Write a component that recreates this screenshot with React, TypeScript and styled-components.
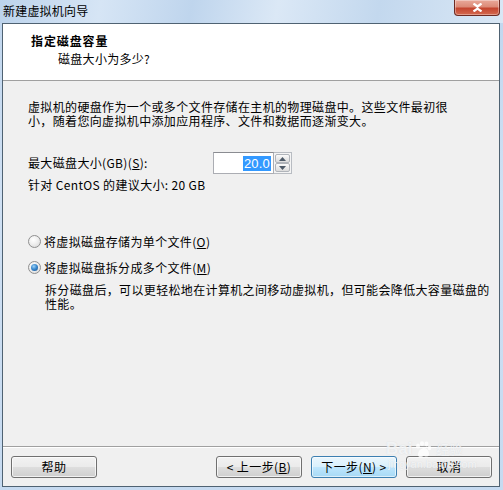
import React from "react";
import styled, { createGlobalStyle } from "styled-components";

const Global = createGlobalStyle`
  html, body { margin: 0; padding: 0; }
  body { width: 503px; height: 490px; overflow: hidden; background: #c9dcf0; }
  * { box-sizing: border-box; }
`;

const FONT = `"Noto Sans CJK SC", "Noto Sans", sans-serif`;

const Window = styled.div`
  width: 503px;
  height: 490px;
  display: flex;
  flex-direction: column;
  background: linear-gradient(180deg, #c0d6ee 0%, #cfe0f3 40%, #c6daf0 100%);
  font-family: ${FONT};
  font-size: 12px;
  color: #000;
  position: relative;
  overflow: hidden;
`;

const TitleBar = styled.div`
  height: 23px;
  display: flex;
  justify-content: space-between;
  align-items: flex-start;
  padding-left: 3px;
  background: linear-gradient(
    100deg,
    #bcd3ec 0%,
    #d6e5f5 20%,
    #bfd5ed 38%,
    #dbe8f6 55%,
    #c3d8ee 75%,
    #d9e7f5 100%
  );
`;

const TitleText = styled.div`
  line-height: 21px;
  letter-spacing: 0.2px;
  color: #000;
`;

const CloseButton = styled.div`
  width: 46px;
  height: 16px;
  margin-right: 3px;
  border: 1px solid #6d2a22;
  border-top: none;
  border-radius: 0 0 4px 4px;
  background: linear-gradient(180deg, #e9a99a 0%, #dc8a77 45%, #c4452f 55%, #d56a50 100%);
  display: flex;
  align-items: center;
  justify-content: center;
  box-shadow: inset 0 0 0 1px rgba(255, 255, 255, 0.35);
`;

const Client = styled.div`
  flex: 1;
  margin: 0 3px 3px 2px;
  border: 1px solid #4f6272;
  display: flex;
  flex-direction: column;
  background: #f0f0f0;
`;

const Header = styled.div`
  height: 57px;
  background: #fff;
  border-bottom: 1px solid #a0a0a0;
  padding: 9px 0 0 28px;
  display: flex;
  flex-direction: column;
`;

const HeaderTitle = styled.div`
  font-weight: bold;
  line-height: 16px;
  letter-spacing: 0.9px;
`;

const HeaderSub = styled.div`
  line-height: 16px;
  margin-top: 2px;
  padding-left: 27px;
  letter-spacing: 0.3px;
`;

const Body = styled.div`
  flex: 1;
  padding: 19px 0 0 25px;
  display: flex;
  flex-direction: column;
  letter-spacing: 0.35px;
`;

const Paragraph = styled.p<{ $indent?: number; $top?: number }>`
  margin: ${(p) => p.$top ?? 0}px 0 0 ${(p) => p.$indent ?? 0}px;
  line-height: 14px;
  white-space: nowrap;
`;

const FieldRow = styled.div`
  margin-top: 24px;
  display: flex;
  align-items: center;
  height: 22px;
`;

const FieldLabel = styled.div`
  width: 185px;
  line-height: 14px;
`;

const SpinBox = styled.div`
  display: flex;
  height: 22px;
`;

const TextBox = styled.div`
  width: 61px;
  height: 22px;
  border: 1px solid #abadb3;
  border-top-color: #8a8c91;
  background: #fff;
  display: flex;
  align-items: center;
  justify-content: flex-end;
  padding-right: 2px;
`;

const Selected = styled.span`
  background: #3399ff;
  color: #fff;
  line-height: 15px;
  padding: 0 1px;
  letter-spacing: 0.2px;
  font-family: "Liberation Sans", sans-serif;
  font-size: 13px;
`;

const SpinButtons = styled.div`
  width: 18px;
  display: flex;
  flex-direction: column;
  padding: 1px;
  border: 1px solid #b8bcc2;
  border-left: none;
  background: #f4f4f4;
`;

const SpinButton = styled.div`
  flex: 1;
  border: 1px solid #b0b4ba;
  border-radius: 2px;
  background: linear-gradient(180deg, #fbfbfb 0%, #eaeaea 50%, #dcdcdc 100%);
  display: flex;
  align-items: center;
  justify-content: center;
`;

const Hint = styled.div`
  margin-top: 4px;
  line-height: 14px;
`;

const RadioRow = styled.label<{ $top: number }>`
  margin-top: ${(p) => p.$top}px;
  display: flex;
  align-items: center;
  height: 16px;
  gap: 3px;
`;

const RadioCircle = styled.span<{ $checked?: boolean }>`
  width: 13px;
  height: 13px;
  border-radius: 50%;
  border: 1px solid #8f8f8f;
  background: radial-gradient(circle at 40% 35%, #ffffff 0%, #f1f1f1 40%, #d5d5d5 100%);
  display: flex;
  align-items: center;
  justify-content: center;
  flex-shrink: 0;
  &::after {
    content: "";
    display: ${(p) => (p.$checked ? "block" : "none")};
    width: 7px;
    height: 7px;
    border-radius: 50%;
    background: radial-gradient(circle at 40% 35%, #9fd2f5 0%, #3a8ad0 45%, #184d87 100%);
  }
`;

const U = styled.span`
  text-decoration: underline;
  text-underline-offset: 1px;
`;

const Separator = styled.div`
  height: 1px;
  background: #a0a0a0;
  border-bottom: 1px solid #fff;
  box-sizing: content-box;
`;

const Footer = styled.div`
  height: 38px;
  padding: 8px 7px 0 8px;
  display: flex;
  align-items: flex-start;
`;

const Button = styled.div<{ $default?: boolean }>`
  width: 86px;
  height: 22px;
  border: 1px solid ${(p) => (p.$default ? "#3c7fb1" : "#707070")};
  border-radius: 3px;
  background: ${(p) =>
    p.$default
      ? "linear-gradient(180deg, #eaf6fd 0%, #d9f0fc 48%, #bee6fd 52%, #a7d9f5 100%)"
      : "linear-gradient(180deg, #f2f2f2 0%, #ebebeb 48%, #dddddd 52%, #cfcfcf 100%)"};
  box-shadow: inset 0 0 0 1px ${(p) => (p.$default ? "rgba(255,255,255,0.6)" : "rgba(255,255,255,0.7)")};
  display: flex;
  align-items: center;
  justify-content: center;
  line-height: 14px;
  letter-spacing: 0.4px;
`;

const Spacer = styled.div`
  flex: 1;
`;

const ButtonGap = styled.div`
  width: 9px;
`;

const Watermark = styled.div`
  position: absolute;
  left: 386px;
  top: 440px;
  color: rgba(255, 255, 255, 0.7);
  font-family: "Liberation Sans", sans-serif;
  pointer-events: none;
  display: flex;
  flex-direction: column;
  text-shadow: 0 0 1px rgba(180, 190, 200, 0.5);
`;

const WmTop = styled.div`
  display: flex;
  align-items: center;
  gap: 2px;
  font-size: 17px;
  font-weight: bold;
  line-height: 18px;
`;

const WmCn = styled.span`
  font-family: ${FONT};
  font-size: 13px;
  font-weight: normal;
  margin-left: 2px;
`;

const WmBottom = styled.div`
  font-size: 11px;
  line-height: 12px;
  padding-left: 2px;
`;

const Arrow = ({ up }: { up?: boolean }) => (
  <svg width="7" height="4" viewBox="0 0 7 4">
    <path d={up ? "M0 4 L3.5 0 L7 4 Z" : "M0 0 L3.5 4 L7 0 Z"} fill="#4d5a68" />
  </svg>
);

export default function App() {
  return (
    <>
      <Global />
      <Window>
        <TitleBar>
          <TitleText>新建虚拟机向导</TitleText>
          <CloseButton>
            <svg width="11" height="9" viewBox="0 0 11 9">
              <path
                d="M1.5 0.5 L5.5 3.5 L9.5 0.5 M1.5 8.5 L5.5 5.5 L9.5 8.5"
                stroke="#fff"
                strokeWidth="2.2"
                fill="none"
              />
            </svg>
          </CloseButton>
        </TitleBar>
        <Client>
          <Header>
            <HeaderTitle>指定磁盘容量</HeaderTitle>
            <HeaderSub>磁盘大小为多少?</HeaderSub>
          </Header>
          <Body>
            <Paragraph>
              虚拟机的硬盘作为一个或多个文件存储在主机的物理磁盘中。这些文件最初很
              <br />
              小，随着您向虚拟机中添加应用程序、文件和数据而逐渐变大。
            </Paragraph>
            <FieldRow>
              <FieldLabel>
                最大磁盘大小(GB)(<U>S</U>):
              </FieldLabel>
              <SpinBox>
                <TextBox>
                  <Selected>20.0</Selected>
                </TextBox>
                <SpinButtons>
                  <SpinButton>
                    <Arrow up />
                  </SpinButton>
                  <SpinButton>
                    <Arrow />
                  </SpinButton>
                </SpinButtons>
              </SpinBox>
            </FieldRow>
            <Hint>针对 CentOS 的建议大小: 20 GB</Hint>
            <RadioRow $top={41}>
              <RadioCircle />
              <span>
                将虚拟磁盘存储为单个文件(<U>O</U>)
              </span>
            </RadioRow>
            <RadioRow $top={10}>
              <RadioCircle $checked />
              <span>
                将虚拟磁盘拆分成多个文件(<U>M</U>)
              </span>
            </RadioRow>
            <Paragraph $indent={17} $top={8}>
              拆分磁盘后，可以更轻松地在计算机之间移动虚拟机，但可能会降低大容量磁盘的
              <br />
              性能。
            </Paragraph>
          </Body>
          <Separator />
          <Footer>
            <Button>帮助</Button>
            <Spacer />
            <Button>
              &lt; 上一步(<U>B</U>)
            </Button>
            <ButtonGap />
            <Button $default>
              下一步(<U>N</U>) &gt;
            </Button>
            <ButtonGap />
            <Button>取消</Button>
          </Footer>
        </Client>
        <Watermark>
          <WmTop>
            <span>Bai</span>
            <svg width="18" height="17" viewBox="0 0 18 17">
              <g fill="rgba(255,255,255,0.8)">
                <ellipse cx="4" cy="5" rx="2" ry="2.6" />
                <ellipse cx="8" cy="2.6" rx="2" ry="2.4" />
                <ellipse cx="12.5" cy="3" rx="2" ry="2.4" />
                <ellipse cx="15.5" cy="7" rx="1.8" ry="2.2" />
                <path d="M4 14 C4 9 8 7 10 7 C13 7 15 10 15 13 C15 16 12 16 10 15 C8 16 4 17 4 14 Z" />
              </g>
            </svg>
            <WmCn>经验</WmCn>
          </WmTop>
          <WmBottom>jingyan.baidu.com</WmBottom>
        </Watermark>
      </Window>
    </>
  );
}
